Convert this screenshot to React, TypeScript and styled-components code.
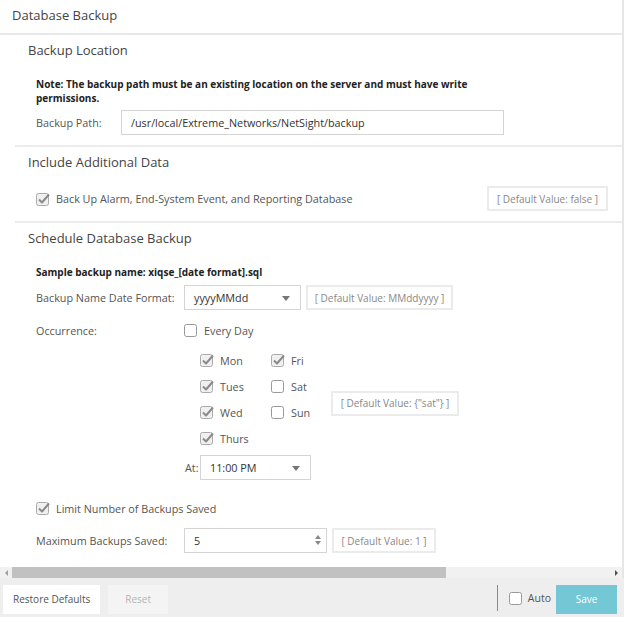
import React from 'react'
import styled, {createGlobalStyle} from 'styled-components'

// ── Global ──

const GlobalStyle = createGlobalStyle`
  html, body {
    margin: 0;
    padding: 0;
    background: #fff;
  }
  body {
    font-family: 'Open Sans', 'Noto Sans', sans-serif;
    color: #555;
    -webkit-font-smoothing: antialiased;
  }
  * {
    box-sizing: border-box;
  }
`

// ── Styled Components ──

const Page = styled.div`
  width: 624px;
  height: 617px;
  display: flex;
  flex-direction: column;
  overflow: hidden;
`

const Panel = styled.div`
  flex: 1;
  display: flex;
  flex-direction: column;
  border-right: 2px solid #e6e6e6;
  min-height: 0;
`

const Header = styled.div`
  height: 35px;
  padding: 0 12px 3px;
  display: flex;
  align-items: center;
  border-bottom: 2px solid #e8e8e8;
  font-size: 13px;
  color: #444;
`

const Body = styled.div`
  flex: 1;
  padding-left: 15px;
  overflow: hidden;
`

const Section = styled.section<{$last?: boolean}>`
  border-bottom: ${(p) => (p.$last ? 'none' : '2px solid #ececec')};
  padding: 0 0 10px 13px;
`

const SectionTitle = styled.h2`
  margin: 0;
  height: 31px;
  line-height: 31px;
  font-size: 13px;
  font-weight: 400;
  color: #444;
`

const SectionContent = styled.div`
  padding-left: 8px;
  display: flex;
  flex-direction: column;
`

const Note = styled.div`
  margin-top: 11px;
  font-size: 10px;
  line-height: 14px;
  font-weight: 700;
  color: #222;
  width: 440px;
`

const Row = styled.div<{$top: number}>`
  display: flex;
  align-items: center;
  margin-top: ${(p) => p.$top}px;
`

const FieldLabel = styled.div<{$width: number}>`
  width: ${(p) => p.$width}px;
  flex-shrink: 0;
  font-size: 10.8px;
  color: #555;
`

const TextInput = styled.div<{$width: number}>`
  width: ${(p) => p.$width}px;
  height: 25px;
  border: 1px solid #d4d4d4;
  background: #fff;
  display: flex;
  align-items: center;
  padding: 0 9px;
  font-size: 10.8px;
  color: #333;
  position: relative;
`

const Arrow = styled.span`
  position: absolute;
  right: 10px;
  top: 10px;
  width: 0;
  height: 0;
  border-left: 4.5px solid transparent;
  border-right: 4.5px solid transparent;
  border-top: 5px solid #777;
`

const Spinner = styled.span`
  position: absolute;
  right: 5px;
  top: 6px;
  display: flex;
  flex-direction: column;
  gap: 2px;
`

const SpinUp = styled.span`
  width: 0;
  height: 0;
  border-left: 3.5px solid transparent;
  border-right: 3.5px solid transparent;
  border-bottom: 4px solid #888;
`

const SpinDown = styled(SpinUp)`
  border-bottom: none;
  border-top: 4px solid #888;
`

const DefaultBox = styled.div<{$width: number; $left?: number}>`
  width: ${(p) => p.$width}px;
  margin-left: ${(p) => p.$left ?? 5}px;
  height: 25px;
  border: 2px solid #ebebeb;
  display: flex;
  align-items: center;
  justify-content: center;
  font-size: 10px;
  color: #888;
  white-space: nowrap;
`

const CheckLine = styled.label`
  display: flex;
  align-items: center;
  gap: 6px;
  height: 20px;
  font-size: 10.8px;
  color: #555;
`

const CheckSpacer = styled.div`
  flex: 1;
`

const DaysBlock = styled.div`
  display: flex;
  align-items: center;
  margin-top: 7px;
  margin-left: 164px;
`

const DaysGrid = styled.div`
  display: grid;
  grid-template-columns: 71px 60px;
  grid-auto-rows: 26px;
  align-items: center;
`

const AtLabel = styled.span`
  width: 15px;
  font-size: 10.8px;
  color: #555;
`

const ScrollBar = styled.div`
  height: 11px;
  background: #f1f1f1;
  display: flex;
  align-items: center;
  flex-shrink: 0;
`

const ScrollArrow = styled.span<{$dir: 'left' | 'right'}>`
  width: 12px;
  display: flex;
  justify-content: center;
  &::before {
    content: '';
    width: 0;
    height: 0;
    border-top: 3px solid transparent;
    border-bottom: 3px solid transparent;
    ${(p) => (p.$dir === 'left' ? 'border-right: 3px solid #a0a0a0;' : 'border-left: 3px solid #505050;')}
  }
`

const ScrollTrack = styled.div`
  flex: 1;
  height: 100%;
  display: flex;
`

const ScrollThumb = styled.div`
  width: 434px;
  height: 100%;
  background: #c1c1c1;
`

const Footer = styled.div`
  height: 39px;
  flex-shrink: 0;
  background: #eeeeee;
  display: flex;
  align-items: center;
  padding: 0 7px 0 3px;
  gap: 8px;
`

const FooterButton = styled.button<{$muted?: boolean}>`
  height: 29px;
  margin-top: 3px;
  padding: 0 ${(p) => (p.$muted ? 17 : 10)}px;
  border: none;
  background: ${(p) => (p.$muted ? '#f4f4f4' : '#fff')};
  color: ${(p) => (p.$muted ? '#b5b5b5' : '#555')};
  font-family: inherit;
  font-size: 10px;
`

const FooterRight = styled.div`
  margin-left: auto;
  display: flex;
  align-items: center;
  height: 100%;
`

const Separator = styled.div`
  width: 1px;
  height: 26px;
  background: #8a8a8a;
  margin-right: 11px;
`

const AutoLabel = styled.span`
  font-size: 10.5px;
  color: #555;
  margin: 0 5px 0 5px;
`

const SaveButton = styled.button`
  width: 61px;
  height: 29px;
  margin-top: 3px;
  border: none;
  background: #74c8d6;
  color: #fff;
  font-family: inherit;
  font-size: 10px;
`

// ── Checkbox ──

function Checkbox({checked}: {checked?: boolean}) {
  return (
    <svg width="14" height="14" viewBox="0 0 14 14" style={{flexShrink: 0}}>
      <rect
        x="0.5"
        y="1.5"
        width="12"
        height="12"
        rx="2"
        fill={checked ? '#f0f0f0' : '#fff'}
        stroke={checked ? '#aaa' : '#999'}
      />
      {checked && (
        <path d="M3 7.5 L6 10.5 L13 2.5" fill="none" stroke="#8a8a8a" strokeWidth="2" strokeLinejoin="round" />
      )}
    </svg>
  )
}

const days: [string, boolean][] = [
  ['Mon', true],
  ['Fri', true],
  ['Tues', true],
  ['Sat', false],
  ['Wed', true],
  ['Sun', false],
  ['Thurs', true],
]

// ── Component ──

export default function App() {
  return (
    <Page>
      <GlobalStyle />
      <Panel>
        <Header>Database Backup</Header>
        <Body>
          <Section>
            <SectionTitle>Backup Location</SectionTitle>
            <SectionContent>
              <Note>
                Note: The backup path must be an existing location on the server and must have write permissions.
              </Note>
              <Row $top={5}>
                <FieldLabel $width={85}>Backup Path:</FieldLabel>
                <TextInput $width={383}>/usr/local/Extreme_Networks/NetSight/backup</TextInput>
              </Row>
            </SectionContent>
          </Section>

          <Section>
            <SectionTitle>Include Additional Data</SectionTitle>
            <SectionContent>
              <Row $top={8} style={{paddingRight: 14}}>
                <CheckLine>
                  <Checkbox checked />
                  Back Up Alarm, End-System Event, and Reporting Database
                </CheckLine>
                <CheckSpacer />
                <DefaultBox $width={121}>[ Default Value: false ]</DefaultBox>
              </Row>
            </SectionContent>
          </Section>

          <Section $last>
            <SectionTitle>Schedule Database Backup</SectionTitle>
            <SectionContent>
              <Note>Sample backup name: xiqse_[date format].sql</Note>
              <Row $top={6}>
                <FieldLabel $width={148}>Backup Name Date Format:</FieldLabel>
                <TextInput $width={117}>
                  yyyyMMdd
                  <Arrow />
                </TextInput>
                <DefaultBox $width={147}>[ Default Value: MMddyyyy ]</DefaultBox>
              </Row>
              <Row $top={10}>
                <FieldLabel $width={148}>Occurrence:</FieldLabel>
                <CheckLine>
                  <Checkbox />
                  Every Day
                </CheckLine>
              </Row>
              <DaysBlock>
                <DaysGrid>
                  {days.map(([d, c]) => (
                    <CheckLine key={d}>
                      <Checkbox checked={c} />
                      {d}
                    </CheckLine>
                  ))}
                </DaysGrid>
                <DefaultBox $width={128} $left={0} style={{marginTop: 8}}>
                  [ Default Value: {'{"sat"}'} ]
                </DefaultBox>
              </DaysBlock>
              <Row $top={4} style={{marginLeft: 149}}>
                <AtLabel>At:</AtLabel>
                <TextInput $width={111}>
                  11:00 PM
                  <Arrow />
                </TextInput>
              </Row>
              <Row $top={18}>
                <CheckLine>
                  <Checkbox checked />
                  Limit Number of Backups Saved
                </CheckLine>
              </Row>
              <Row $top={10}>
                <FieldLabel $width={148}>Maximum Backups Saved:</FieldLabel>
                <TextInput $width={143}>
                  5
                  <Spinner>
                    <SpinUp />
                    <SpinDown />
                  </Spinner>
                </TextInput>
                <DefaultBox $width={104}>[ Default Value: 1 ]</DefaultBox>
              </Row>
            </SectionContent>
          </Section>
        </Body>
        <ScrollBar>
          <ScrollArrow $dir="left" />
          <ScrollTrack>
            <ScrollThumb />
          </ScrollTrack>
          <ScrollArrow $dir="right" />
        </ScrollBar>
      </Panel>
      <Footer>
        <FooterButton>Restore Defaults</FooterButton>
        <FooterButton $muted>Reset</FooterButton>
        <FooterRight>
          <Separator />
          <Checkbox />
          <AutoLabel>Auto</AutoLabel>
          <SaveButton>Save</SaveButton>
        </FooterRight>
      </Footer>
    </Page>
  )
}
